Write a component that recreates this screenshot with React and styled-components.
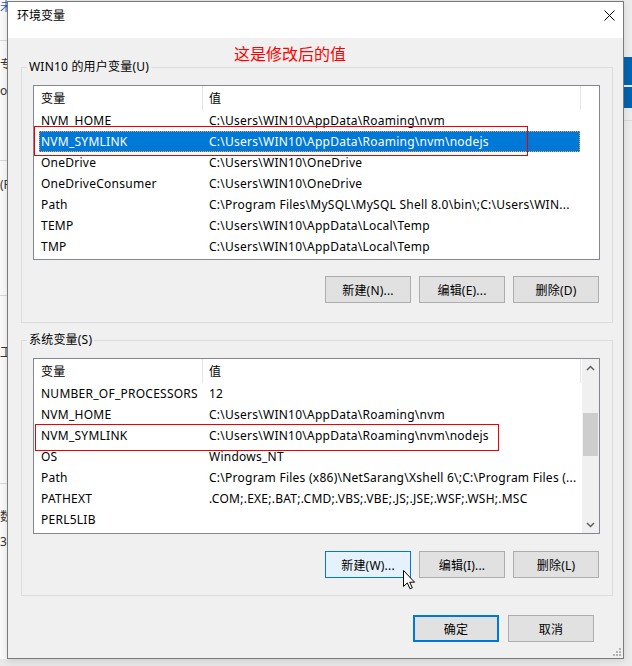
import React from "react";
import styled, { createGlobalStyle } from "styled-components";

const GlobalStyle = createGlobalStyle`
  html, body {
    margin: 0;
    padding: 0;
  }
  body {
    background: #e9e9e9;
    font-family: "Noto Sans", "Noto Sans CJK SC", sans-serif;
    font-size: 12px;
    color: #000;
  }
`;

const Desktop = styled.div`
  position: relative;
  width: 632px;
  height: 666px;
  overflow: hidden;
  box-sizing: border-box;
  padding: 1px 0 0 7px;
  background: #e9e9e9;
`;

// windows behind the dialog, only a sliver of each shows
const BackWindow = styled.div`
  position: absolute;
  top: 0;
  left: ${p => p.$left}px;
  width: ${p => p.$width}px;
  height: ${p => p.$height}px;
  background: ${p => p.$bg};
  overflow: hidden;
`;

const BackText = styled.span`
  position: absolute;
  left: ${p => p.$left}px;
  top: ${p => p.$top}px;
  font-size: 12px;
  line-height: 14px;
  color: ${p => p.$color || "#333"};
  white-space: nowrap;
`;

const BackLine = styled.div`
  position: absolute;
  left: 0;
  right: 0;
  top: ${p => p.$top}px;
  height: 1px;
  background: #dadada;
`;

const BackBlock = styled.div`
  position: absolute;
  left: 0;
  right: 0;
  top: ${p => p.$top}px;
  height: ${p => p.$height}px;
  background: #0063b1;
`;

const Dialog = styled.div`
  position: relative;
  z-index: 1;
  width: 617px;
  height: 658px;
  box-sizing: border-box;
  border: 1px solid #7a7a7a;
  background: #f0f0f0;
  display: flex;
  flex-direction: column;
  box-shadow: 0 2px 8px rgba(0, 0, 0, 0.12);
`;

const TitleBar = styled.div`
  height: 36px;
  flex: none;
  background: #fff;
  display: flex;
  align-items: flex-start;
  justify-content: space-between;
  padding-left: 9px;
`;

const Title = styled.div`
  padding-top: 6px;
  line-height: 16px;
`;

const CloseIcon = styled.svg`
  margin: 8px 8px 0 0;
`;

const Body = styled.div`
  position: relative;
  flex: 1;
  padding: 21px 10px 0 13px;
`;

const Annotation = styled.div`
  position: absolute;
  left: 226px;
  top: 7px;
  font-family: "Noto Sans CJK SC", sans-serif;
  font-size: 16px;
  line-height: 16px;
  color: #ff0000;
`;

const Group = styled.fieldset`
  margin: ${p => p.$top}px 0 0 0;
  padding: 10px 12px ${p => p.$bottom}px 11px;
  border: 1px solid #dcdcdc;
  min-width: 0;
`;

const Legend = styled.legend`
  margin-left: -6px;
  padding: 0 2px;
  line-height: 16px;
  letter-spacing: 0.2px;
`;

const ListBox = styled.div`
  position: relative;
  height: ${p => p.$height}px;
  box-sizing: border-box;
  border: 1px solid #828790;
  background: #fff;
  display: grid;
  grid-template-columns: ${p => (p.$scroll ? "1fr 17px" : "1fr")};
  overflow: hidden;
  letter-spacing: 0.25px;
`;

const ListContent = styled.div`
  min-width: 0;
`;

const Header = styled.div`
  display: grid;
  grid-template-columns: 169px 378px;
  height: 24px;
`;

const HeaderCell = styled.div`
  display: flex;
  align-items: center;
  padding-left: ${p => p.$pad}px;
  border-right: 1px solid #e5e5e5;
`;

const Row = styled.div`
  display: grid;
  grid-template-columns: 163px 378px;
  width: 541px;
  margin-left: 5px;
  height: 21px;
  align-items: center;
  white-space: nowrap;
  background: ${p => (p.$selected ? "#0078d7" : "transparent")};
  color: ${p => (p.$selected ? "#fff" : "#000")};
  outline: ${p => (p.$selected ? "1px dotted #f5a04a" : "none")};
  outline-offset: -1px;
`;

const Cell = styled.span`
  padding-left: ${p => p.$pad}px;
  overflow: hidden;
`;

const Marker = styled.div`
  position: absolute;
  left: ${p => p.$left}px;
  top: ${p => p.$top}px;
  width: ${p => p.$width}px;
  height: ${p => p.$height}px;
  box-sizing: border-box;
  border: 1px solid #ee0000;
  pointer-events: none;
`;

const ScrollBar = styled.div`
  background: #f0f0f0;
  display: flex;
  flex-direction: column;
`;

const ScrollArrow = styled.div`
  height: 17px;
  display: flex;
  align-items: center;
  justify-content: center;
`;

const ScrollTrack = styled.div`
  flex: 1;
`;

const Thumb = styled.div`
  margin: ${p => p.$offset}px 1px 0 1px;
  height: ${p => p.$size}px;
  background: #cdcdcd;
`;

const ButtonRow = styled.div`
  display: flex;
  justify-content: flex-end;
  gap: ${p => p.$gap}px;
  margin-top: ${p => p.$top}px;
  padding-right: ${p => p.$right || 0}px;
`;

const Button = styled.div`
  width: 86px;
  height: 27px;
  box-sizing: border-box;
  display: flex;
  align-items: center;
  justify-content: center;
  background: ${p => (p.$hover ? "#e5f1fb" : "#e1e1e1")};
  border: ${p => (p.$default ? 2 : 1)}px solid
    ${p => (p.$hover || p.$default ? "#0078d7" : "#adadad")};
  letter-spacing: 0.2px;
`;

const Grip = styled.svg`
  position: absolute;
  right: 2px;
  bottom: 2px;
`;

const Cursor = styled.svg`
  position: absolute;
  left: 403px;
  top: 570px;
  z-index: 5;
`;

const userVars = [
  ["NVM_HOME", "C:\\Users\\WIN10\\AppData\\Roaming\\nvm"],
  ["NVM_SYMLINK", "C:\\Users\\WIN10\\AppData\\Roaming\\nvm\\nodejs", true],
  ["OneDrive", "C:\\Users\\WIN10\\OneDrive"],
  ["OneDriveConsumer", "C:\\Users\\WIN10\\OneDrive"],
  ["Path", "C:\\Program Files\\MySQL\\MySQL Shell 8.0\\bin\\;C:\\Users\\WIN..."],
  ["TEMP", "C:\\Users\\WIN10\\AppData\\Local\\Temp"],
  ["TMP", "C:\\Users\\WIN10\\AppData\\Local\\Temp"],
];

const systemVars = [
  ["NUMBER_OF_PROCESSORS", "12"],
  ["NVM_HOME", "C:\\Users\\WIN10\\AppData\\Roaming\\nvm"],
  ["NVM_SYMLINK", "C:\\Users\\WIN10\\AppData\\Roaming\\nvm\\nodejs"],
  ["OS", "Windows_NT"],
  ["Path", "C:\\Program Files (x86)\\NetSarang\\Xshell 6\\;C:\\Program Files (..."],
  ["PATHEXT", ".COM;.EXE;.BAT;.CMD;.VBS;.VBE;.JS;.JSE;.WSF;.WSH;.MSC"],
  ["PERL5LIB", ""],
];

function Chevron({ up }) {
  return (
    <svg width="9" height="6" viewBox="0 0 9 6">
      <path
        d={up ? "M1 5 L4.5 1.5 L8 5" : "M1 1 L4.5 4.5 L8 1"}
        fill="none"
        stroke="#606060"
        strokeWidth="1.5"
      />
    </svg>
  );
}

function VarList({ rows, scroll, marker, height }) {
  return (
    <ListBox $scroll={scroll} $height={height}>
      <ListContent>
        <Header>
          <HeaderCell $pad={7}>变量</HeaderCell>
          <HeaderCell $pad={6}>值</HeaderCell>
        </Header>
        {rows.map(([name, value, selected]) => (
          <Row key={name} $selected={selected}>
            <Cell $pad={2}>{name}</Cell>
            <Cell $pad={7}>{value}</Cell>
          </Row>
        ))}
      </ListContent>
      {scroll && (
        <ScrollBar>
          <ScrollArrow>
            <Chevron up />
          </ScrollArrow>
          <ScrollTrack>
            <Thumb $offset={37} $size={43} />
          </ScrollTrack>
          <ScrollArrow>
            <Chevron />
          </ScrollArrow>
        </ScrollBar>
      )}
      {marker && <Marker {...marker} />}
    </ListBox>
  );
}

export default function App() {
  return (
    <>
      <GlobalStyle />
      <Desktop>
        <BackWindow $left={0} $width={40} $height={659} $bg="#fafafa">
          <BackText $left={0} $top={0} $color="#1a5fb4">
            未
          </BackText>
          <BackLine $top={40} />
          <BackText $left={0} $top={58}>
            专
          </BackText>
          <BackText $left={0} $top={84}>
            o
          </BackText>
          <BackLine $top={160} />
          <BackText $left={0} $top={178}>
            (R
          </BackText>
          <BackLine $top={295} />
          <BackText $left={0} $top={346}>
            工作
          </BackText>
          <BackLine $top={483} />
          <BackText $left={0} $top={510}>
            数
          </BackText>
          <BackText $left={0} $top={535}>
            30
          </BackText>
        </BackWindow>
        <BackWindow $left={600} $width={32} $height={666} $bg="#ececec">
          <BackBlock $top={57} $height={28} />
          <BackBlock $top={87} $height={21} />
          <BackLine $top={120} />
        </BackWindow>

        <Dialog>
          <TitleBar>
            <Title>环境变量</Title>
            <CloseIcon width="11" height="11" viewBox="0 0 11 11">
              <path d="M0.5 0.5 L10.5 10.5 M10.5 0.5 L0.5 10.5" stroke="#000" strokeWidth="1" />
            </CloseIcon>
          </TitleBar>
          <Body>
            <Annotation>这是修改后的值</Annotation>

            <Group $top={0} $bottom={19}>
              <Legend>WIN10 的用户变量(U)</Legend>
              <VarList
                rows={userVars}
                height={175}
                marker={{ $left: 0, $top: 40, $width: 494, $height: 30 }}
              />
              <ButtonRow $gap={8} $top={16} $right={1}>
                <Button>新建(N)...</Button>
                <Button>编辑(E)...</Button>
                <Button>删除(D)</Button>
              </ButtonRow>
            </Group>

            <Group $top={9} $bottom={17}>
              <Legend>系统变量(S)</Legend>
              <VarList
                rows={systemVars}
                height={176}
                scroll
                marker={{ $left: 1, $top: 65, $width: 464, $height: 27 }}
              />
              <ButtonRow $gap={8} $top={17} $right={1}>
                <Button $hover>新建(W)...</Button>
                <Button>编辑(I)...</Button>
                <Button>删除(L)</Button>
              </ButtonRow>
            </Group>

            <ButtonRow $gap={9} $top={19} $right={19}>
              <Button $default>确定</Button>
              <Button>取消</Button>
            </ButtonRow>
          </Body>
          <Grip width="8" height="8" viewBox="0 0 8 8">
            {[
              [6, 0],
              [3, 3],
              [6, 3],
              [0, 6],
              [3, 6],
              [6, 6],
            ].map(([x, y]) => (
              <rect key={`${x}-${y}`} x={x} y={y} width="2" height="2" fill="#b4b4b4" />
            ))}
          </Grip>
        </Dialog>

        <Cursor width="13" height="20" viewBox="0 0 13 20">
          <path
            d="M0.5 0.5 L0.5 16.5 L4.3 12.9 L7 18.8 L9.3 17.8 L6.7 12.2 L11.6 12.2 Z"
            fill="#fff"
            stroke="#000"
            strokeWidth="1"
            strokeLinejoin="round"
          />
        </Cursor>
      </Desktop>
    </>
  );
}
